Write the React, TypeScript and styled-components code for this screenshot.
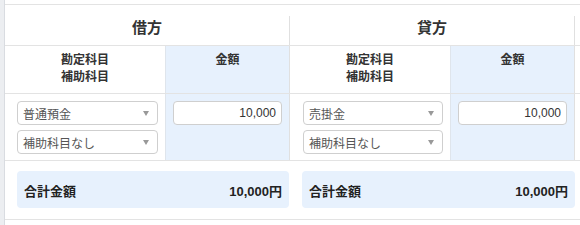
import React from "react";
import styled, { createGlobalStyle } from "styled-components";

const Global = createGlobalStyle`
  html, body { margin: 0; padding: 0; background: #fff; }
  body { font-family: "Liberation Sans", "Noto Sans CJK JP", sans-serif; color: #333; }
  * { box-sizing: border-box; }
`;

const Page = styled.div`
  display: flex;
  width: 580px;
  height: 225px;
  overflow: hidden;
`;

const Sidebar = styled.div`
  width: 5px;
  flex: none;
  background: #eceef1;
  border-right: 1px solid #d9dce1;
`;

const Main = styled.div`
  flex: 1;
  padding-top: 4px;
`;

const Table = styled.div`
  border-top: 1px solid #e3e3e3;
`;

const Row = styled.div<{ $h: number }>`
  display: grid;
  grid-template-columns: 160px 124px 1px 160px 124px 1px 1fr;
  height: ${(p) => p.$h}px;
  border-bottom: 1px solid #e3e3e3;
`;

const SideTitle = styled.div`
  grid-column: span 2;
  display: flex;
  align-items: center;
  justify-content: center;
  padding-top: 2px;
  font-size: 15px;
  font-weight: bold;
  color: #333;
`;

const Divider = styled.div<{ $top?: number }>`
  background: #e0e0e0;
  margin-top: ${(p) => p.$top ?? 0}px;
`;

const Cell = styled.div<{ $blue?: boolean }>`
  background: ${(p) => (p.$blue ? "#e7f1fd" : "#fff")};
  border-left: ${(p) => (p.$blue ? "1px solid #dfe5ec" : "none")};
`;

const HeadCell = styled(Cell)`
  padding-top: 6px;
  text-align: center;
  font-size: 12px;
  line-height: 17px;
  font-weight: bold;
  color: #333;
`;

const FieldCell = styled(Cell)<{ $pl: number }>`
  display: flex;
  flex-direction: column;
  gap: 5px;
  padding: 7px 7px 0 ${(p) => p.$pl}px;
`;

const SelectBox = styled.div`
  height: 24px;
  border: 1px solid #cfcfcf;
  border-radius: 4px;
  background: #fff;
  display: flex;
  align-items: center;
  justify-content: space-between;
  padding: 0 8px 0 5px;
  font-size: 12px;
  color: #555;
`;

const Arrow = styled.span`
  width: 0;
  height: 0;
  border-left: 3px solid transparent;
  border-right: 3px solid transparent;
  border-top: 5px solid #999;
`;

const AmountInput = styled.div`
  height: 24px;
  border: 1px solid #cfcfcf;
  border-radius: 4px;
  background: #fff;
  display: flex;
  align-items: center;
  justify-content: flex-end;
  padding: 0 5px;
  font-size: 12px;
  color: #333;
`;

const SummaryRow = styled.div`
  display: grid;
  grid-template-columns: 284px 1px 284px 1px 1fr;
  padding: 10px 0 11px;
  border-bottom: 1px solid #e3e3e3;
`;

const SummarySlot = styled.div<{ $span: number }>`
  grid-column: span ${(p) => p.$span};
  padding-left: 12px;
`;

const TotalBox = styled.div`
  height: 37px;
  border-radius: 4px;
  background: #e7f1fd;
  display: flex;
  align-items: center;
  justify-content: space-between;
  padding: 1px 7px 0 7px;
  font-size: 13px;
  font-weight: bold;
  color: #222;
`;

const Select = ({ label }: { label: string }) => (
  <SelectBox>
    <span>{label}</span>
    <Arrow />
  </SelectBox>
);

type Side = { title: string; account: string; amount: string };

const sides: Side[] = [
  { title: "借方", account: "普通預金", amount: "10,000" },
  { title: "貸方", account: "売掛金", amount: "10,000" },
];

export default function App() {
  return (
    <>
      <Global />
      <Page>
        <Sidebar />
        <Main>
          <Table>
            <Row $h={41}>
              {sides.map((s) => (
                <React.Fragment key={s.title}>
                  <SideTitle>{s.title}</SideTitle>
                  <Divider $top={11} />
                </React.Fragment>
              ))}
              <div />
            </Row>
            <Row $h={48}>
              {sides.map((s) => (
                <React.Fragment key={s.title}>
                  <HeadCell>
                    勘定科目
                    <br />
                    補助科目
                  </HeadCell>
                  <HeadCell $blue>金額</HeadCell>
                  <Divider />
                </React.Fragment>
              ))}
              <div />
            </Row>
            <Row $h={67}>
              {sides.map((s, i) => (
                <React.Fragment key={s.title}>
                  <FieldCell $pl={i === 0 ? 12 : 13}>
                    <Select label={s.account} />
                    <Select label="補助科目なし" />
                  </FieldCell>
                  <FieldCell $blue $pl={7}>
                    <AmountInput>{s.amount}</AmountInput>
                  </FieldCell>
                  <Divider />
                </React.Fragment>
              ))}
              <div />
            </Row>
            <SummaryRow>
              <SummarySlot $span={1}>
                <TotalBox>
                  <span>合計金額</span>
                  <span>10,000円</span>
                </TotalBox>
              </SummarySlot>
              <div />
              <SummarySlot $span={2}>
                <TotalBox>
                  <span>合計金額</span>
                  <span>10,000円</span>
                </TotalBox>
              </SummarySlot>
            </SummaryRow>
          </Table>
        </Main>
      </Page>
    </>
  );
}
